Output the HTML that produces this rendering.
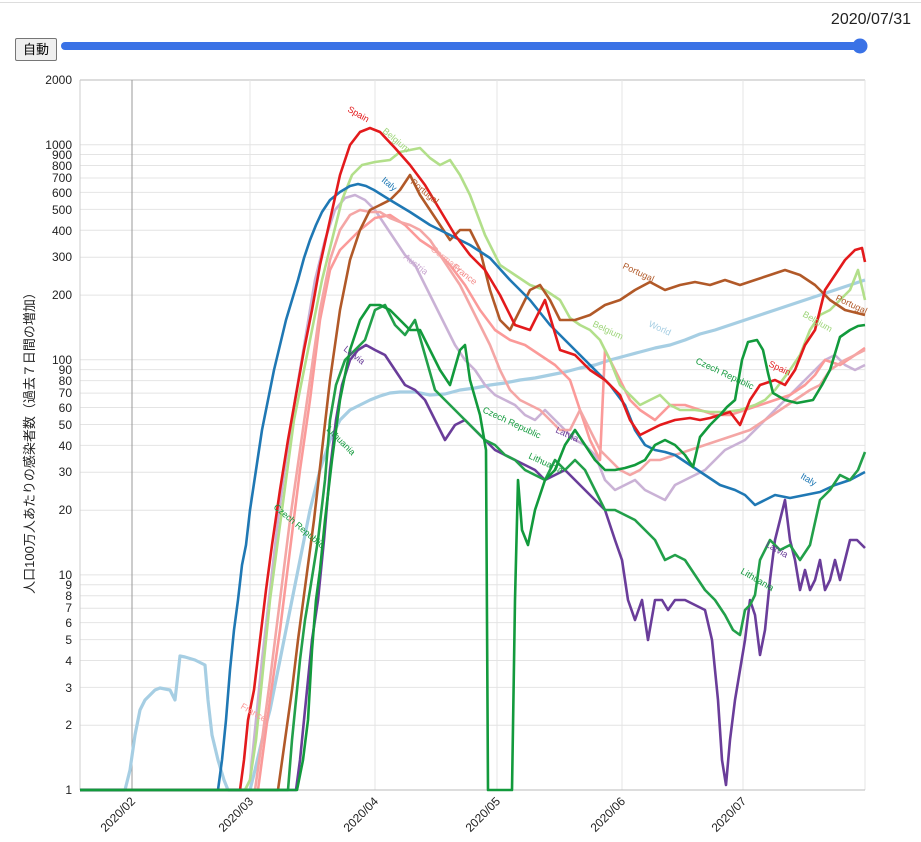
<!DOCTYPE html>
<html><head><meta charset="utf-8">
<style>
html,body{margin:0;padding:0;background:#fff;width:921px;height:842px;overflow:hidden}
body{font-family:"Liberation Sans","Noto Sans CJK JP",sans-serif}
.btn{position:absolute;left:15px;top:38px;width:42px;height:23px;border:1px solid #767676;border-radius:2px;background:#efefef;font-size:13px;line-height:22px;text-align:center;box-sizing:border-box}
.date{position:absolute;right:10px;top:11px;font-size:16px;color:#222}
.topline{position:absolute;left:0;top:2px;width:921px;height:1px;background:#ddd}
</style></head><body>
<div class="topline"></div>
<div class="date">2020/07/31</div>
<div class="btn">自動</div>
<svg width="921" height="842" style="position:absolute;left:0;top:0" font-family="Liberation Sans, Noto Sans CJK JP, sans-serif">
<line x1="65" y1="46" x2="860" y2="46" stroke="#3a72e6" stroke-width="8" stroke-linecap="round"/>
<circle cx="860" cy="46" r="7.5" fill="#3a72e6"/>
<g stroke="#e4e4e4" stroke-width="1">
<line x1="80" x2="865" y1="80" y2="80" stroke="#bbb"/>
<line x1="80" x2="865" y1="144.7" y2="144.7"/><line x1="80" x2="865" y1="154.5" y2="154.5"/><line x1="80" x2="865" y1="165.5" y2="165.5"/><line x1="80" x2="865" y1="178" y2="178"/><line x1="80" x2="865" y1="192.4" y2="192.4"/><line x1="80" x2="865" y1="209.4" y2="209.4"/><line x1="80" x2="865" y1="230.3" y2="230.3"/><line x1="80" x2="865" y1="257.2" y2="257.2"/><line x1="80" x2="865" y1="295.1" y2="295.1"/>
<line x1="80" x2="865" y1="359.8" y2="359.8"/><line x1="80" x2="865" y1="369.6" y2="369.6"/><line x1="80" x2="865" y1="380.6" y2="380.6"/><line x1="80" x2="865" y1="393.1" y2="393.1"/><line x1="80" x2="865" y1="407.5" y2="407.5"/><line x1="80" x2="865" y1="424.5" y2="424.5"/><line x1="80" x2="865" y1="445.4" y2="445.4"/><line x1="80" x2="865" y1="472.3" y2="472.3"/><line x1="80" x2="865" y1="510.2" y2="510.2"/>
<line x1="80" x2="865" y1="574.9" y2="574.9"/><line x1="80" x2="865" y1="584.7" y2="584.7"/><line x1="80" x2="865" y1="595.7" y2="595.7"/><line x1="80" x2="865" y1="608.2" y2="608.2"/><line x1="80" x2="865" y1="622.6" y2="622.6"/><line x1="80" x2="865" y1="639.6" y2="639.6"/><line x1="80" x2="865" y1="660.5" y2="660.5"/><line x1="80" x2="865" y1="687.4" y2="687.4"/><line x1="80" x2="865" y1="725.2" y2="725.2"/>
<line x1="250" x2="250" y1="80" y2="790"/><line x1="375" x2="375" y1="80" y2="790"/><line x1="497" x2="497" y1="80" y2="790"/><line x1="622" x2="622" y1="80" y2="790"/><line x1="743" x2="743" y1="80" y2="790"/><line x1="865" x2="865" y1="80" y2="790"/>
</g>
<line x1="132" x2="132" y1="80" y2="790" stroke="#999"/>
<line x1="80" x2="80" y1="80" y2="790" stroke="#ccc"/>
<line x1="80" x2="865" y1="790" y2="790" stroke="#bbb"/>
<g font-size="12" fill="#222" text-anchor="end">
<text x="72" y="84">2000</text><text x="72" y="149">1000</text><text x="72" y="159">900</text><text x="72" y="170">800</text><text x="72" y="182">700</text><text x="72" y="197">600</text><text x="72" y="214">500</text><text x="72" y="235">400</text><text x="72" y="261">300</text><text x="72" y="299">200</text>
<text x="72" y="364">100</text><text x="72" y="374">90</text><text x="72" y="385">80</text><text x="72" y="397">70</text><text x="72" y="412">60</text><text x="72" y="429">50</text><text x="72" y="450">40</text><text x="72" y="476">30</text><text x="72" y="514">20</text>
<text x="72" y="579">10</text><text x="72" y="589">9</text><text x="72" y="600">8</text><text x="72" y="612">7</text><text x="72" y="627">6</text><text x="72" y="644">5</text><text x="72" y="665">4</text><text x="72" y="692">3</text><text x="72" y="729">2</text><text x="72" y="794">1</text>
</g>
<g font-size="12" fill="#222" text-anchor="end">
<text transform="translate(136,802) rotate(-45)">2020/02</text>
<text transform="translate(254,802) rotate(-45)">2020/03</text>
<text transform="translate(379,802) rotate(-45)">2020/04</text>
<text transform="translate(501,802) rotate(-45)">2020/05</text>
<text transform="translate(626,802) rotate(-45)">2020/06</text>
<text transform="translate(747,802) rotate(-45)">2020/07</text>
</g>
<text transform="translate(34,440) rotate(-90)" font-size="13" fill="#222" text-anchor="middle">人口100万人あたりの感染者数（過去７日間の増加）</text>
<g fill="none" stroke-linejoin="round" stroke-width="2.6">
<polyline stroke="#a6cee3" stroke-width="3.2" points="80,790 125,790 130,770 135,735 140,710 145,700 150,695 155,690 160,688 170,690 175,700 180,656 185,657 195,660 205,665 208,700 212,735 218,760 224,780 228,790 250,790 255,770 262,740 270,710 280,660 290,610 300,560 310,510 320,470 330,440 340,420 350,410 360,405 370,400 380,396 390,393 400,392 415,392 430,395 445,394 460,390 475,388 490,385 505,383 520,380 535,378 550,375 565,372 580,368 595,365 610,360 625,356 640,352 655,348 670,345 685,340 700,334 715,330 730,325 745,320 760,315 775,310 790,305 805,300 820,295 835,290 850,285 865,280"/>
<polyline stroke="#cab2d6" points="80,790 245,790 250,780 256,720 262,660 270,590 278,520 286,460 295,400 305,340 315,280 325,240 335,210 345,198 355,195 365,200 375,210 385,225 395,240 405,255 415,265 425,285 435,305 445,325 455,345 465,360 475,370 485,385 495,395 505,400 515,405 525,415 535,420 545,410 555,420 565,430 575,440 585,445 595,455 605,480 615,490 625,485 635,480 645,490 655,495 665,500 675,485 685,480 695,475 705,470 715,460 725,450 735,445 745,440 755,430 765,420 775,410 785,400 795,390 805,380 815,370 825,360 835,355 845,365 855,370 865,365"/>
<polyline stroke="#fb9a99" points="80,790 258,790 262,760 270,700 280,630 290,550 300,470 310,400 320,320 330,270 340,250 350,240 360,230 375,218 390,215 405,225 420,240 435,250 450,265 465,285 480,310 495,330 510,340 525,345 540,355 555,365 570,380 580,410 590,440 600,460 605,350 610,360 620,380 630,400 640,410 655,420 670,405 685,405 700,410 715,415 730,415 745,410 760,405 775,400 790,395 805,385 815,375 825,360 840,365 855,355 865,348"/>
<polyline stroke="#f4a6a5" points="255,790 262,740 270,680 280,600 290,520 300,450 310,380 320,310 330,260 340,230 350,215 360,210 370,212 380,212 390,218 400,222 410,225 420,230 430,240 440,255 450,270 460,285 470,305 480,325 490,345 500,370 510,390 520,400 530,405 540,410 550,420 560,430 570,430 580,410 590,430 600,450 610,460 620,470 630,475 640,470 650,460 660,460 675,455 690,450 705,445 720,440 735,435 750,430 765,420 780,410 795,400 810,390 820,385 830,370 845,360 855,355 865,350"/>
<polyline stroke="#b2df8a" points="80,790 245,790 250,780 256,740 262,680 270,600 278,540 286,480 294,420 302,380 312,330 322,280 332,240 342,200 352,175 362,165 375,162 390,160 400,152 410,150 420,148 430,158 440,165 450,160 460,175 470,195 485,235 500,265 515,275 530,285 545,290 560,300 570,318 580,325 590,330 600,340 610,360 620,385 630,395 640,405 650,400 660,395 670,405 680,410 695,410 710,412 725,412 740,410 755,405 765,400 775,390 790,370 800,355 810,330 820,315 830,310 840,300 850,290 858,270 865,300"/>
<polyline stroke="#b15928" points="80,790 278,790 285,740 292,690 298,640 306,580 314,520 322,450 330,380 340,310 350,260 360,230 370,210 380,205 390,200 400,190 410,175 420,195 430,210 440,225 450,240 460,230 470,230 480,250 490,290 500,320 510,330 520,310 530,290 540,285 550,300 560,320 575,320 590,315 605,305 620,300 635,290 650,282 665,290 680,285 695,282 710,285 725,280 740,285 755,280 770,275 785,270 800,275 815,285 830,300 845,310 865,315"/>
<polyline stroke="#1f78b4" points="80,790 218,790 222,760 226,720 230,670 234,630 238,600 242,565 246,545 250,510 256,470 262,430 268,400 274,370 280,345 286,320 292,300 298,280 304,258 310,240 316,225 322,212 330,200 340,192 350,186 358,184 366,186 374,190 390,200 410,212 430,225 450,235 470,245 490,258 510,280 530,300 550,325 570,345 590,365 610,385 625,405 635,430 645,445 655,450 665,452 675,455 690,465 705,475 720,485 735,490 745,495 755,505 765,500 775,495 790,498 805,495 820,492 835,485 850,480 865,472"/>
<polyline stroke="#e31a1c" points="80,790 237,790 240,790 244,760 248,720 254,690 260,640 266,590 272,545 280,490 288,440 296,395 304,350 312,310 320,265 330,220 340,175 350,145 360,132 370,128 380,132 395,148 410,165 425,185 440,210 455,235 470,255 485,270 500,295 515,325 530,330 545,300 560,350 575,355 590,370 605,380 620,395 630,420 640,435 650,430 660,425 675,420 690,418 700,420 710,418 720,415 730,412 740,425 750,400 760,385 775,380 785,385 795,370 805,345 815,330 825,290 835,275 845,260 855,250 862,248 865,262"/>
<polyline stroke="#6a3d9a" points="80,790 296,790 300,760 304,720 308,680 312,640 318,600 324,540 330,470 336,420 342,385 350,360 358,350 366,345 375,350 385,355 395,370 405,385 415,390 425,400 435,420 445,440 455,425 465,420 475,430 485,440 495,450 505,455 515,460 525,465 535,470 545,480 555,475 565,470 575,480 585,490 595,500 605,510 615,540 622,560 628,600 635,620 642,600 648,640 655,600 662,600 668,610 675,600 685,600 695,605 705,610 712,640 718,700 722,760 726,785 730,740 735,700 740,670 745,640 750,600 755,615 760,655 765,630 770,580 775,540 780,520 785,500 790,540 795,560 800,590 805,570 810,590 815,580 820,560 825,590 830,580 835,560 840,580 845,560 850,540 857,540 865,548"/>
<polyline stroke="#22a04a" points="80,790 284,790 288,790 292,740 296,700 300,660 305,620 310,590 318,540 325,480 330,420 336,385 345,360 355,350 365,340 375,310 385,305 395,325 405,335 415,320 425,355 435,390 445,400 455,410 465,420 475,430 485,440 495,445 505,455 515,460 525,470 535,475 545,480 555,460 565,470 575,460 585,470 595,490 605,510 615,510 625,515 635,520 645,530 655,540 665,560 675,555 685,560 695,575 705,590 715,600 725,615 733,630 740,635 745,610 750,605 755,595 760,560 770,540 780,550 790,545 800,560 810,545 820,500 830,490 840,475 850,480 858,470 865,452"/>
<polyline stroke="#129a3c" points="80,790 297,790 303,760 308,720 312,650 316,600 320,570 325,520 332,460 340,400 350,350 360,320 370,305 380,305 390,310 400,320 410,330 420,330 430,350 440,370 450,385 460,350 465,345 470,380 480,415 486,450 488,790 512,790 515,600 518,480 522,530 528,545 535,510 545,480 555,470 565,445 575,430 585,445 595,460 605,470 615,470 625,468 635,465 645,460 655,445 665,440 675,445 685,455 693,467 700,437 710,425 720,415 727,407 735,400 742,360 748,342 757,340 763,350 768,373 773,393 785,400 797,403 813,400 822,385 830,370 840,337 850,330 858,326 865,325"/>
</g>
<g font-size="9">
<text transform="translate(347,111) rotate(30)" fill="#e31a1c">Spain</text>
<text transform="translate(382,132) rotate(40)" fill="#9ed57a">Belgium</text>
<text transform="translate(381,181) rotate(40)" fill="#1f78b4">Italy</text>
<text transform="translate(410,183) rotate(40)" fill="#b15928">Portugal</text>
<text transform="translate(403,258) rotate(38)" fill="#c9a6d0">Austria</text>
<text transform="translate(430,250) rotate(38)" fill="#f4a6a5">Germany</text>
<text transform="translate(452,268) rotate(38)" fill="#f38a88">France</text>
<text transform="translate(343,350) rotate(38)" fill="#6a3d9a">Latvia</text>
<text transform="translate(326,430) rotate(45)" fill="#129a3c">Lithuania</text>
<text transform="translate(273,508) rotate(40)" fill="#129a3c">Czech Republic</text>
<text transform="translate(240,708) rotate(30)" fill="#fb9a99">France</text>
<text transform="translate(622,268) rotate(25)" fill="#b15928">Portugal</text>
<text transform="translate(592,326) rotate(25)" fill="#9ed57a">Belgium</text>
<text transform="translate(648,326) rotate(25)" fill="#a6cee3">World</text>
<text transform="translate(695,363) rotate(25)" fill="#129a3c">Czech Republic</text>
<text transform="translate(768,366) rotate(25)" fill="#e31a1c">Spain</text>
<text transform="translate(482,412) rotate(25)" fill="#129a3c">Czech Republic</text>
<text transform="translate(555,432) rotate(25)" fill="#6a3d9a">Latvia</text>
<text transform="translate(528,458) rotate(25)" fill="#129a3c">Lithuania</text>
<text transform="translate(800,478) rotate(30)" fill="#1f78b4">Italy</text>
<text transform="translate(765,546) rotate(30)" fill="#6a3d9a">Latvia</text>
<text transform="translate(740,573) rotate(30)" fill="#129a3c">Lithuania</text>
<text transform="translate(835,300) rotate(25)" fill="#b15928">Portugal</text>
<text transform="translate(802,316) rotate(30)" fill="#9ed57a">Belgium</text>
</g>
</svg>
</body></html>
